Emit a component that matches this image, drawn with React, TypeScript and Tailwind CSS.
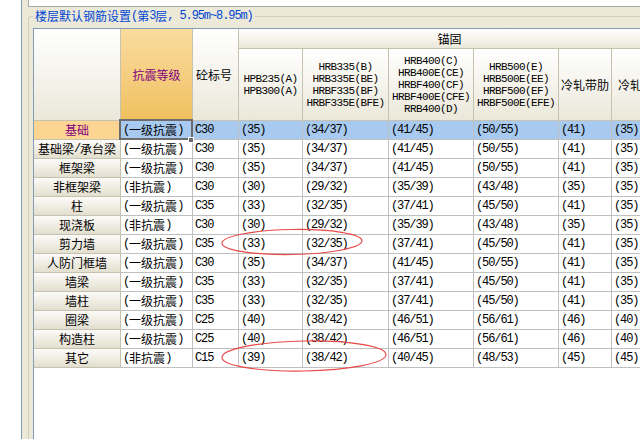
import React from 'react';

const CJK = /[\u2E80-\u9FFF\uFF00-\uFFEF]/;

// mixes a CJK font with a narrow mono for latin runs, like the old SimSun grid
function Txt({ s, small }: { s: string; small?: boolean }) {
  const parts = s.match(/[\u2E80-\u9FFF\uFF00-\uFFEF]+|[^\u2E80-\u9FFF\uFF00-\uFFEF]+/g) ?? [];
  return (
    <>
      {parts.map((p, i) =>
        CJK.test(p) ? (
          <span key={i} className="font-['Noto_Sans_CJK_SC',sans-serif] text-[12px]">
            {p}
          </span>
        ) : small ? (
          <span key={i} className="font-['Liberation_Mono',monospace] text-[11px] tracking-[-0.6px] whitespace-pre">
            {p}
          </span>
        ) : (
          <span key={i} className="font-['Liberation_Mono',monospace] text-[12px] tracking-[-1.1px] whitespace-pre">
            {p}
          </span>
        )
      )}
    </>
  );
}

const subHeads: string[][] = [
  ['HPB235(A)', 'HPB300(A)'],
  ['HRB335(B)', 'HRB335E(BE)', 'HRBF335(BF)', 'HRBF335E(BFE)'],
  ['HRB400(C)', 'HRB400E(CE)', 'HRBF400(CF)', 'HRBF400E(CFE)', 'RRB400(D)'],
  ['HRB500(E)', 'HRB500E(EE)', 'HRBF500(EF)', 'HRBF500E(EFE)'],
  ['冷轧带肋'],
  ['冷轧扭'],
];

const rows: string[][] = [
  ['基础', '(一级抗震)', 'C30', '(35)', '(34/37)', '(41/45)', '(50/55)', '(41)', '(35)'],
  ['基础梁/承台梁', '(一级抗震)', 'C30', '(35)', '(34/37)', '(41/45)', '(50/55)', '(41)', '(35)'],
  ['框架梁', '(一级抗震)', 'C30', '(35)', '(34/37)', '(41/45)', '(50/55)', '(41)', '(35)'],
  ['非框架梁', '(非抗震)', 'C30', '(30)', '(29/32)', '(35/39)', '(43/48)', '(35)', '(35)'],
  ['柱', '(一级抗震)', 'C35', '(33)', '(32/35)', '(37/41)', '(45/50)', '(41)', '(35)'],
  ['现浇板', '(非抗震)', 'C30', '(30)', '(29/32)', '(35/39)', '(43/48)', '(35)', '(35)'],
  ['剪力墙', '(一级抗震)', 'C35', '(33)', '(32/35)', '(37/41)', '(45/50)', '(41)', '(35)'],
  ['人防门框墙', '(一级抗震)', 'C30', '(35)', '(34/37)', '(41/45)', '(50/55)', '(41)', '(35)'],
  ['墙梁', '(一级抗震)', 'C35', '(33)', '(32/35)', '(37/41)', '(45/50)', '(41)', '(35)'],
  ['墙柱', '(一级抗震)', 'C35', '(33)', '(32/35)', '(37/41)', '(45/50)', '(41)', '(35)'],
  ['圈梁', '(一级抗震)', 'C25', '(40)', '(38/42)', '(46/51)', '(56/61)', '(46)', '(40)'],
  ['构造柱', '(一级抗震)', 'C25', '(40)', '(38/42)', '(46/51)', '(56/61)', '(46)', '(40)'],
  ['其它', '(非抗震)', 'C15', '(39)', '(38/42)', '(40/45)', '(48/53)', '(45)', '(45)'],
];

const headCell =
  'border-r border-b border-[#c5c2b2] bg-linear-to-b from-[#ffffff] to-[#ebe8da] text-black leading-[12px]';

export default function App() {
  return (
    <div className="relative w-[640px] h-[439px] overflow-hidden bg-white flex text-[12px] leading-[12px] font-['Noto_Sans_CJK_SC',sans-serif]">
      <div className="w-[21px] shrink-0 bg-white" />

      {/* dialog body */}
      <div className="w-[619px] h-full shrink-0 bg-[#ece9d8] border-l border-[#7f9db9] pl-[6px] flex flex-col">
        <div className="h-[7px] shrink-0 bg-white border-l border-b border-[#a8a8a8]" />

        <fieldset className="mt-[1px] w-[700px] h-[440px] shrink-0 border border-[#d0d0bf] rounded-[3px] pl-[4px] pt-[4px]">
          <legend className="h-[16px] px-[2px] flex items-center whitespace-nowrap text-[#0046d5]">
            <Txt s="楼层默认钢筋设置(第3层, 5.95m~8.95m)" />
          </legend>

          {/* the grid */}
          <div className="h-[420px] bg-white border-l border-t border-[#7f9db9]">
            <div className="grid grid-cols-[87px_72px_46px_64px_86px_85px_85px_53px_49px] grid-rows-[20px_72px_repeat(13,19px)]">
              <div className={`row-span-2 ${headCell}`} />
              <div className="row-span-2 flex items-center justify-center border-r border-b border-[#c5c2b2] bg-linear-to-b from-[#fadc9f] to-[#efc05e] text-[#800080]">
                <Txt s="抗震等级" />
              </div>
              <div className={`row-span-2 flex items-center pl-[3px] ${headCell}`}>
                <Txt s="砼标号" />
              </div>
              <div className={`col-span-6 flex items-center justify-center ${headCell}`}>
                <Txt s="锚固" />
              </div>
              {subHeads.map((lines, i) => (
                <div key={i} className={`flex flex-col items-center justify-center ${headCell}`}>
                  {lines.map((l) => (
                    <div key={l} className="h-[12px] leading-[12px] whitespace-nowrap flex items-center">
                      <Txt s={l} small />
                    </div>
                  ))}
                </div>
              ))}

              {rows.map((r, ri) =>
                r.map((c, ci) => {
                  const sel = ri === 0;
                  if (ci === 0) {
                    return (
                      <div
                        key={`${ri}-${ci}`}
                        className={
                          sel
                            ? 'flex items-center justify-center border-r border-b border-[#c5c2b2] bg-[#fdd592] text-[#800080]'
                            : 'flex items-center justify-center border-r border-b border-[#c5c2b2] bg-linear-to-b from-[#fcfbf8] to-[#e3dfcf] text-black'
                        }
                      >
                        <Txt s={c} />
                      </div>
                    );
                  }
                  return (
                    <div
                      key={`${ri}-${ci}`}
                      className={`relative flex items-center pl-[2px] whitespace-nowrap border-r border-b border-[#c0c0c0] text-black ${
                        sel ? 'bg-[#a8caf0]' : 'bg-white'
                      }`}
                    >
                      <Txt s={c} />
                      {sel && ci === 1 && (
                        <>
                          <div className="absolute -left-[2px] -top-[2px] -right-[1px] -bottom-[1px] border-2 border-[#6c6c6c]" />
                          <div className="absolute left-[67px] top-[16px] w-[6px] h-[6px] bg-[#6c6c6c] border border-white z-10" />
                        </>
                      )}
                    </div>
                  );
                })
              )}
            </div>
          </div>
        </fieldset>
      </div>

      {/* hand-drawn red marks */}
      <svg className="absolute inset-0 pointer-events-none" width="640" height="439">
        <ellipse cx="292" cy="242" rx="70" ry="12.5" fill="none" stroke="#e84848" strokeWidth="1.2" transform="rotate(-1 292 242)" />
        <ellipse cx="304" cy="356" rx="82" ry="15" fill="none" stroke="#e84848" strokeWidth="1.2" transform="rotate(-1 304 356)" />
      </svg>
    </div>
  );
}
